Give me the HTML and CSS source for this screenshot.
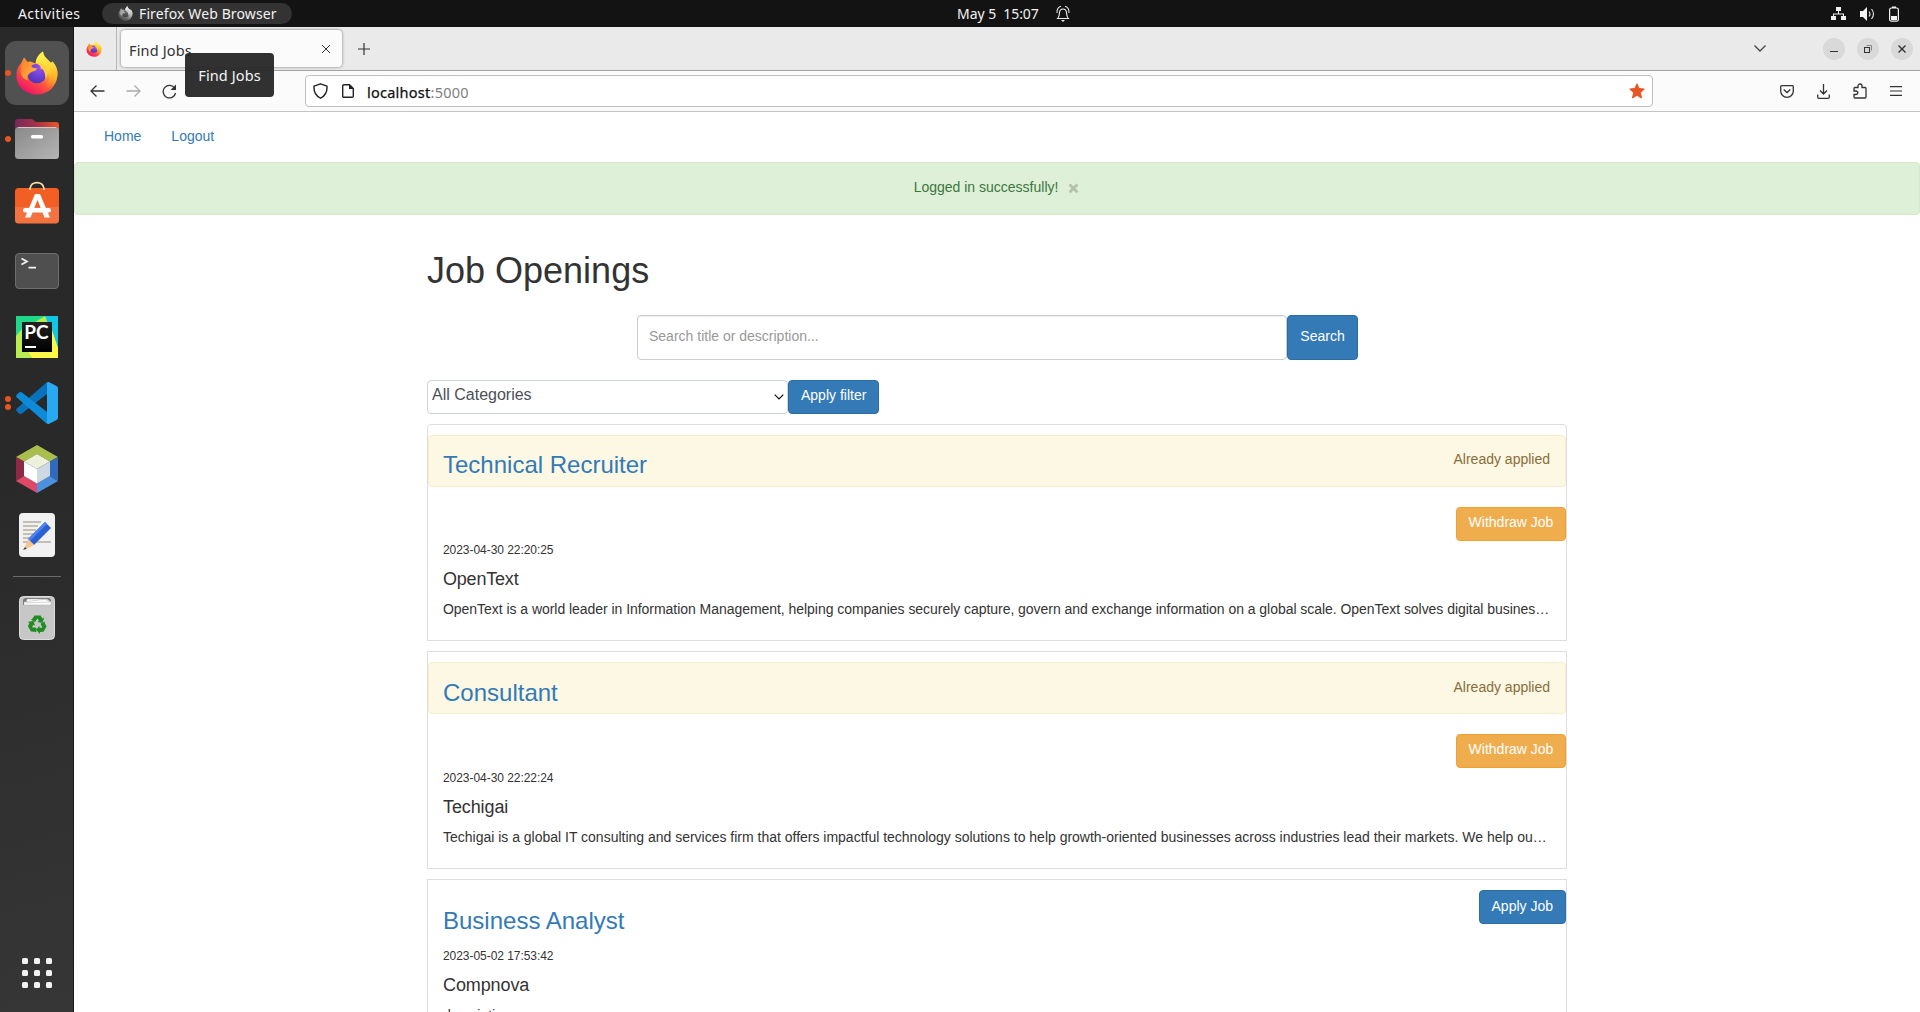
FILE: index.html
```html
<!DOCTYPE html>
<html lang="en">
<head>
<meta charset="utf-8">
<title>Find Jobs</title>
<link rel="stylesheet" href="styles.css">
</head>
<body>
<svg class="defs" aria-hidden="true">
  <defs>
    <linearGradient id="fx-body" x1=".8" y1=".1" x2=".25" y2=".95"><stop offset="0" stop-color="#fff14a"/><stop offset=".35" stop-color="#ffb02c"/><stop offset=".65" stop-color="#ff5040"/><stop offset="1" stop-color="#f01468"/></linearGradient>
    <linearGradient id="fx-tail" x1=".3" y1="0" x2=".6" y2="1"><stop offset="0" stop-color="#fff44f"/><stop offset=".5" stop-color="#ffd53a"/><stop offset="1" stop-color="#ff980e" stop-opacity="0"/></linearGradient>
    <radialGradient id="fx-globe" cx=".65" cy=".2" r=".85"><stop offset="0" stop-color="#9a50f5"/><stop offset="1" stop-color="#4b35b8"/></radialGradient>
    <linearGradient id="fx-head" x1="0" y1="0" x2="1" y2=".6"><stop offset="0" stop-color="#ff7a2a"/><stop offset="1" stop-color="#ffb53a"/></linearGradient>
    <symbol id="firefox" viewBox="0 0 42 44">
      <path fill="url(#fx-body)" d="M5 12.500 8 6.500l3.500 4.500 3-.5 5 2C20 7 23 3 27 .5c.5 5.500 5 8 8 11.500l1.500-1.500c4 5 5.500 9 5 14C40.500 35.500 32 43.500 21 43.500S.5 35.500.5 25C.5 19 2 16 5 12.500z"/>
      <path fill="url(#fx-tail)" d="M20 12C20 7 23 3 27 .5c.5 5.500 5 8 8 11.500l1.500-1.500c4 5 5.500 9 5 14C40 33 34 38 27 38c6-5 8-12 4-18z"/>
      <circle cx="21" cy="22.500" r="9.800" fill="url(#fx-globe)"/>
      <path fill="#ffcf3b" d="M20 12.700c3-1.700 7-.7 10 2.800 3 4 2 9-.5 13 0-5-1-7.500-2.500-10l-2.500-1c1-2-1.500-4-4.500-4.800z"/>
      <path fill="url(#fx-head)" d="M6 14 8 7l3.500 4.500 4 .5c-1 2 0 3.500 1.500 4.800l4 .7c-.5 3-5 2.500-7.500 5-2 1.500-3 4-1.500 7-7-2-9-8-6-15.500z"/>
    </symbol>
  </defs>
</svg>
<div class="desktop">
  <header class="topbar">
    <div class="topbar-left">
      <span class="activities">Activities</span>
      <span class="app-pill"><svg class="pill-icon"><use href="#firefox"/></svg><span class="pill-label">Firefox Web Browser</span></span>
    </div>
    <div class="clock"><span>May 5</span><span class="time">15:07</span>
      <svg class="bell" width="14" height="18" viewBox="0 0 14 18" fill="none" stroke="#eee" stroke-width="1.1"><path d="M.8 13.500h12.400M2 13c1.300-1.500 1.300-3 1.500-5.500.2-2 1.500-3.500 3.500-3.500s3.300 1.500 3.500 3.500c.2 2.500.2 4 1.500 5.500M1 8C.8 4.500 2.500 2 5 1.300M13 8c.2-3.500-1.500-6-4-6.700"/><path d="M5 15h4L7 17z" fill="#eee" stroke="none"/></svg>
    </div>
    <div class="tray">
      <svg width="15" height="14" viewBox="0 0 15 14" fill="#f2f2f2"><path d="M5 0h5v4H5zM0 9h5v4H0zM10 9h5v4h-5zM7 4h1v2.500H7zM2 6.500h11V9h-1V7.500H3V9H2z"/></svg>
      <svg width="15" height="14" viewBox="0 0 15 14"><path fill="#f2f2f2" d="M0 4h3l4-4v14l-4-4H0z"/><path fill="none" stroke="#ddd" stroke-width="1.200" d="M9 4.500q2 2.500 0 5M11.500 2q4 5 0 10"/></svg>
      <svg width="10" height="16" viewBox="0 0 10 16"><rect x=".6" y="2" width="8.800" height="13.200" rx="1.800" fill="none" stroke="#f2f2f2" stroke-width="1.200"/><path fill="#f2f2f2" d="M3 .5h4V2H3zM2 10h6v4H2z"/></svg>
    </div>
  </header>

  <div class="workspace">
    <nav class="dock">
      <div class="dock-item running"><div class="dock-tile"><svg width="42" height="44"><use href="#firefox"/></svg></div></div>
      <div class="dock-item running">
        <svg width="44" height="40" viewBox="0 0 44 40"><defs><linearGradient id="fo"><stop offset="0" stop-color="#77285a"/><stop offset=".5" stop-color="#a73249"/><stop offset="1" stop-color="#ed5625"/></linearGradient><linearGradient id="fg" x2="1" y2="1"><stop offset="0" stop-color="#898989"/><stop offset="1" stop-color="#b5b5b5"/></linearGradient></defs><path fill="url(#fo)" d="M0 3q0-3 3-3h14l4 3h20q3 0 3 3v12H0z"/><rect y="8" width="44" height="32" rx="3.500" fill="url(#fg)"/><path d="M3 8.500h38" stroke="#ccc"/><rect x="16" y="16" width="12" height="3.500" rx="1.500" fill="#fff"/></svg>
      </div>
      <div class="dock-item store">
        <svg width="44" height="44" viewBox="0 0 44 44"><rect y="8" width="44" height="35.500" rx="3.500" fill="#f15f24"/><path fill="#fff" opacity=".13" d="M0 27h44v13q0 3.500-3.500 3.500h-37Q0 43.500 0 40z"/><path d="M15 10V8.500C16 .6 28 .6 29 8.500V10" fill="none" stroke="#fbe2ab" stroke-width="1.800"/><path d="M20 14h5l10 23.500h-5.500L22.500 20l-7 17.500H10z" fill="#fff"/><rect x="8" y="28" width="28" height="4.600" rx="2.300" fill="#fff"/></svg>
      </div>
      <div class="dock-item">
        <svg width="44" height="36" viewBox="0 0 44 36"><rect x=".5" y=".5" width="43" height="35" rx="3.500" fill="#4f4f4f" stroke="#6d6d6d"/><path d="M6.500 5.500 12 8.500l-5.500 3M13.500 14.700H21" fill="none" stroke="#f5f5f5" stroke-width="1.700"/></svg>
      </div>
      <div class="dock-item">
        <div class="pycharm">
          <svg class="pc-back" width="42" height="42" viewBox="0 0 42 42"><path fill="#21d789" d="M0 0h42v42H0z"/><path fill="#12c7e4" d="M29 0h13v34L28 12z"/><path fill="#fcf84a" d="M36 14l6 18v10H16L8 34z"/><path fill="#b9ec52" d="M16 8 29 0l4 10zM0 42l8-14 8 14zM0 42V20l7-8v18z"/></svg>
          <span class="pc-mark">PC</span>
        </div>
      </div>
      <div class="dock-item running two">
        <svg width="42" height="42" viewBox="0 0 42 42"><path fill="#0a71bb" d="M31 0v12L6 31.500q-1.500 1-3 0L.8 29.300q-1.200-1.300 0-2.700z"/><path fill="#0e8bd8" d="M31 42V30L6 10.500q-1.500-1-3 0L.8 12.700q-1.200 1.300 0 2.700z"/><path fill="#29a9f2" d="M31 .5q1-.8 2.200-.2L40.500 4q1.500.7 1.500 2.400v29.200q0 1.700-1.500 2.400l-7.300 3.700q-1.200.6-2.200-.2z"/></svg>
      </div>
      <div class="dock-item">
        <svg width="42" height="48" viewBox="0 0 42 48"><path fill="#a9bf4d" d="M21 0 42 12l-8 4.500L21 9 8 16.500 0 12z"/><path fill="#8d2947" d="m0 12 8 4.500V31l-8 5z"/><path fill="#dc4a68" d="m0 36 8-5 13 7.500V48z"/><path fill="#4b91df" d="M21 48v-9.500L34 31l8 5z"/><path fill="#3169bd" d="m42 12-8 4.500V31l8 5z"/><path fill="#edf1dc" d="m21 9 13 7.500L21 24 8 16.500z"/><path fill="#fff" d="M8 16.500 21 24v14.500L8 31z"/><path fill="#ced8e3" d="M34 16.500 21 24v14.500L34 31z"/></svg>
      </div>
      <div class="dock-item">
        <svg width="36" height="44" viewBox="0 0 36 44"><rect width="36" height="44" rx="4" fill="#f1f1f1"/><path d="M4 9h18M4 13h15M4 17h13M4 21h13M4 25h12M4 29h28" stroke="#c5c0b5" stroke-width="1.800"/><path fill="#2c5fd2" d="m26 9 6 6-17 17-6-6z"/><path fill="#4d83ee" d="m26 9 2 2L11 28l-2-2z"/><path fill="#f8c48c" d="m9 26 6 6-10 5z"/><path fill="#444" d="m6 34 1.800 1.700L4 37z"/></svg>
      </div>
      <div class="dock-separator"></div>
      <div class="dock-item">
        <svg width="36" height="44" viewBox="0 0 36 44"><rect x=".5" y=".5" width="35" height="43" rx="4" fill="#c7c7c7" stroke="#ddd"/><path d="M4 9V5q0-3 3-3h22q3 0 3 3v4z" fill="#777"/><path d="M5 9V6l23-3 4 3v3zM8 3h18l5 3-24 1z" fill="#fff" stroke="#aaa" stroke-width=".5"/>
          <g fill="#218c21"><path id="arrow" d="M13.500 22.500 15.500 19.500h6l2 3 1.700-1-1.700 5.500-5.200-1 1.700-1-1.500-2.500-2.500 3.500-4-2.300z"/><use href="#arrow" transform="rotate(120 18.300 28.500)"/><use href="#arrow" transform="rotate(240 18.300 28.500)"/></g></svg>
      </div>
      <div class="app-grid"><i></i><i></i><i></i><i></i><i></i><i></i><i></i><i></i><i></i></div>
    </nav>

    <div class="browser">
      <div class="tabstrip">
        <div class="pinned"><svg width="16" height="16"><use href="#firefox"/></svg></div>
        <div class="tab"><span class="tab-title">Find Jobs</span><svg width="8" height="8" viewBox="0 0 8 8" stroke="#333" stroke-width="1"><path d="m0 0 8 8M8 0 0 8"/></svg>
          <div class="tooltip">Find Jobs</div>
        </div>
        <svg class="new-tab" width="12" height="12" viewBox="0 0 12 12" stroke="#333" stroke-width="1.200"><path d="M6 0v12M0 6h12"/></svg>
        <svg class="all-tabs" width="12" height="7" viewBox="0 0 12 7" fill="none" stroke="#444" stroke-width="1.300"><path d="m.5.5 5.500 5.500L11.500.5"/></svg>
        <div class="window-controls">
          <span><svg width="8" height="8" viewBox="0 0 8 8"><path d="M0 6.500h8" stroke="#333"/></svg></span>
          <span><svg width="8" height="8" viewBox="0 0 8 8" fill="none"><path d="M2.500.5h5v5" stroke="#888"/><path d="M.5 2.500h5v5h-5z" stroke="#333" stroke-width="1.100"/></svg></span>
          <span><svg width="8" height="8" viewBox="0 0 8 8" stroke="#333" stroke-width="1.400"><path d="m.5.5 7 7M7.500.5l-7 7"/></svg></span>
        </div>
      </div>
      <div class="toolbar">
        <div class="nav-buttons">
          <svg width="15" height="12" viewBox="0 0 15 12" fill="none" stroke="#333" stroke-width="1.300"><path d="M6.500.5 1 6l5.500 5.500M1 6h13.500"/></svg>
          <svg width="15" height="12" viewBox="0 0 15 12" fill="none" stroke="#aaa" stroke-width="1.300"><path d="M8.500.5 14 6l-5.500 5.500M14 6H.5"/></svg>
          <svg width="15" height="15" viewBox="0 0 15 15" fill="none" stroke="#333" stroke-width="1.300"><path d="M12.800 4.300A6.300 6.300 0 1 0 13.600 9"/><path d="M14 .5V6H8.500z" fill="#333" stroke="none"/></svg>
        </div>
        <div class="urlbar">
          <svg width="15" height="16" viewBox="0 0 15 16" fill="none" stroke="#222" stroke-width="1.400"><path d="M7.500.8 14 3.200c.3 5-1.200 9.500-6.500 12-5.300-2.500-6.800-7-6.500-12z" stroke-linejoin="round"/></svg>
          <svg class="page-icon" width="12" height="14" viewBox="0 0 12 14"><path d="M2 .7h5.500L11.300 4.500V12q0 1.300-1.300 1.300H2Q.7 13.300.7 12V2Q.7.7 2 .7z" fill="none" stroke="#222" stroke-width="1.400"/><path d="M7 0v5h5z" fill="#222"/></svg>
          <span class="url"><span class="host">localhost</span><span class="port">:5000</span></span>
          <svg class="star" width="16" height="16" viewBox="0 0 16 16"><path fill="#e95420" stroke="#e95420" stroke-linejoin="round" d="m8 .8 2.100 4.700 5.200.6-3.900 3.500 1.100 5.400L8 12.300 3.500 15l1.100-5.400L.7 6.100l5.200-.6z"/></svg>
        </div>
        <div class="actions">
          <svg width="14" height="13" viewBox="0 0 14 13" fill="none" stroke="#333" stroke-width="1.300"><path d="M1.700.7h10.600q1 0 1 1V6a6.300 6.300 0 0 1-12.600 0V1.700q0-1 1-1z"/><path d="m3.700 4.500 3.300 3 3.300-3"/></svg>
          <svg width="13" height="15" viewBox="0 0 13 15" fill="none" stroke="#333" stroke-width="1.300"><path d="M6.500 0v10M3 6.500l3.500 3.500L10 6.500M.7 10.500V13q0 1.300 1.300 1.300h9q1.300 0 1.300-1.300v-2.500"/></svg>
          <svg width="14" height="16" viewBox="0 0 14 16" fill="none" stroke="#333" stroke-width="1.300"><path d="M1 8V5.500Q1 4.500 2 4.500h3V3a2 2 0 0 1 4 0v1.500h3q1 0 1 1V14q0 1-1 1H2q-1 0-1-1v-2.500h2a1.700 1.700 0 0 0 0-3.500z"/></svg>
          <svg width="12" height="10" viewBox="0 0 12 10" stroke="#333" stroke-width="1.200"><path d="M0 .6h12M0 5h12M0 9.400h12"/></svg>
        </div>
      </div>

      <main class="page">
        <nav class="site-nav"><a>Home</a><a>Logout</a></nav>
        <div class="flash"><span>Logged in successfully!</span><b class="close">×</b></div>
        <div class="container">
          <h1>Job Openings</h1>
          <div class="search-row"><div class="search-input">Search title or description...</div><span class="btn primary search-btn">Search</span></div>
          <div class="filter-row">
            <div class="select"><span>All Categories</span><svg width="10" height="6" viewBox="0 0 10 6" fill="none" stroke="#111" stroke-width="1.200"><path d="m.7.7 4.300 4.300L9.300.7"/></svg></div>
            <span class="btn primary">Apply filter</span>
          </div>
          <div class="jobs">
            <article class="job first">
              <div class="job-head applied"><h3>Technical Recruiter</h3><span class="status">Already applied</span></div>
              <div class="job-action"><span class="btn warning">Withdraw Job</span></div>
              <div class="job-body"><small>2023-04-30 22:20:25</small><h4>OpenText</h4><p>OpenText is a world leader in Information Management, helping companies securely capture, govern and exchange information on a global scale. OpenText solves digital busines…</p></div>
            </article>
            <article class="job second">
              <div class="job-head applied"><h3>Consultant</h3><span class="status">Already applied</span></div>
              <div class="job-action"><span class="btn warning">Withdraw Job</span></div>
              <div class="job-body"><small>2023-04-30 22:22:24</small><h4>Techigai</h4><p>Techigai is a global IT consulting and services firm that offers impactful technology solutions to help growth-oriented businesses across industries lead their markets. We help ou…</p></div>
            </article>
            <article class="job third">
              <div class="job-head"><h3>Business Analyst</h3><span class="btn primary">Apply Job</span></div>
              <div class="job-body"><small>2023-05-02 17:53:42</small><h4>Compnova</h4><p>description</p></div>
            </article>
          </div>
        </div>
      </main>
    </div>
  </div>
</div>
</body>
</html>
```
FILE: styles.css
```css
* { box-sizing: border-box; }
body { margin: 0; overflow: hidden; font-family: "Liberation Sans", Arial, sans-serif; font-size: 14px; line-height: 20px; color: #333; }
svg { display: block; flex: none; }
.defs { position: absolute; width: 0; height: 0; }
.desktop { width: 1920px; height: 1012px; display: flex; flex-direction: column; overflow: hidden; }

/* System bar */
.topbar { height: 27px; flex: none; background: #131313; color: #f2f2f2; display: grid; grid-template-columns: 1fr auto 1fr; align-items: center; font: 14px/20px "Noto Sans", sans-serif; white-space: nowrap; }
.topbar-left { display: flex; align-items: center; padding-left: 18px; }
.activities { width: 84px; letter-spacing: .4px; }
.app-pill { width: 190px; height: 21px; border-radius: 11px; background: #333; display: flex; align-items: center; padding-left: 16px; gap: 6px; }
.pill-icon { width: 15px; height: 15px; filter: grayscale(1); }
.pill-label { letter-spacing: .12px; }
.clock { display: flex; align-items: center; width: 113px; margin-left: 107px; }
.time { margin-left: 7px; letter-spacing: -.1px; }
.bell { margin-left: auto; }
.tray { display: flex; align-items: center; justify-content: flex-end; gap: 14px; padding-right: 21px; }

/* Dock */
.workspace { flex: 1; min-height: 0; display: flex; }
.dock { width: 74px; flex: none; background: linear-gradient(165deg, #292929 0 45%, #303030 75%, #363636); border-right: 1px solid #171717; display: flex; flex-direction: column; padding-top: 13px; }
.dock-item { height: 66px; flex: none; display: flex; align-items: center; justify-content: center; position: relative; }
.store { padding-bottom: 6px; }
.dock-tile { width: 64px; height: 64px; border-radius: 11px; background: #515151; display: flex; align-items: center; justify-content: center; }
.running::before { content: ""; position: absolute; left: 5px; top: 30px; width: 6px; height: 6px; border-radius: 50%; background: #e95420; }
.two::before { top: 26px; box-shadow: 0 8px #e95420; }
.pycharm { display: grid; place-items: center; width: 42px; height: 42px; }
.pc-back, .pc-mark { grid-area: 1 / 1; }
.pc-mark { position: relative; width: 30px; height: 30px; background: linear-gradient(#222, #000); color: #fff; font: 700 19px/20px Lato, sans-serif; text-align: center; }
.pc-mark::after { content: ""; position: absolute; left: 3px; bottom: 4px; width: 11px; height: 2px; background: #fff; }
.dock-separator { width: 48px; height: 1px; background: #6b6b6b; margin: 8px auto 8px 13px; flex: none; }
.app-grid { margin: auto auto 24px 22px; display: grid; grid-template-columns: repeat(3, 6px); gap: 6px; }
.app-grid i { width: 6px; height: 6px; background: #f3f3f3; border-radius: 1.5px; }

/* Browser chrome */
.browser { flex: 1; min-width: 0; display: flex; flex-direction: column; background: #fff; }
.tabstrip { height: 44px; flex: none; background: #eaeaea; border-bottom: 1px solid #a3a3a3; display: flex; align-items: center; font: 14.5px/20px "Noto Sans", sans-serif; }
.pinned { width: 43px; align-self: stretch; border-right: 1px solid #b5b5b5; display: flex; align-items: center; padding-left: 12px; }
.tab { position: relative; margin-left: 4px; width: 221px; height: 37px; background: #fbfbfb; border-radius: 4px; box-shadow: 0 0 3px rgba(0,0,0,.5); display: flex; align-items: center; justify-content: space-between; padding: 0 12px 0 8px; }
.tab-title { letter-spacing: .15px; padding-top: 2px; }
.tooltip { position: absolute; z-index: 2; left: 64px; top: 23px; width: 89px; height: 44px; border-radius: 4px; background: rgba(38,38,38,.95); color: #f4f4f4; text-align: center; line-height: 45px; letter-spacing: .1px; }
.new-tab { margin-left: 16px; }
.all-tabs { margin-left: auto; margin-right: 57px; }
.window-controls { display: flex; gap: 12px; padding-right: 7px; }
.window-controls span { width: 22px; height: 22px; border-radius: 50%; background: #d9d9d9; display: flex; align-items: center; justify-content: center; }
.toolbar { height: 41px; flex: none; background: #fbfbfb; border-bottom: 1px solid #c4c4c4; display: flex; align-items: center; }
.nav-buttons { width: 231px; display: flex; align-items: center; gap: 21px; padding-left: 16px; }
.urlbar { width: 1348px; height: 32px; border: 1px solid #bfbfbf; border-radius: 4px; background: #fff; display: flex; align-items: center; padding: 0 8px 0 7px; }
.page-icon { margin-left: 14px; }
.url { margin-left: 13px; padding-top: 2px; font: 14.5px/20px "Noto Sans", sans-serif; letter-spacing: .25px; }
.host { color: #111; -webkit-text-stroke: .25px #111; }
.port { color: #808080; }
.star { margin-left: auto; margin-right: -1px; }
.actions { display: flex; align-items: center; gap: 23px; margin-left: 127px; }

/* Job board */
.page { flex: 1; min-height: 0; overflow: hidden; }
.site-nav { height: 50px; display: flex; gap: 30px; padding: 14px 0 0 30px; color: #337ab7; }
.flash { height: 53px; background: #dff0d8; border: 1px solid #d6e9c6; border-radius: 4px; color: #3c763d; display: flex; justify-content: center; padding: 14px 2px 0 0; }
.close { font-size: 17px; line-height: 24px; margin-left: 10px; color: #000; opacity: .2; -webkit-text-stroke: 1px #000; }
.container { width: 1140px; margin-left: 353px; padding-top: 36px; }
h1, h3, h4, p { margin: 0; font-weight: 400; }
h1 { font-size: 36px; line-height: 40px; height: 64px; }
.search-row { display: flex; height: 45px; padding-left: 210px; }
.search-input { width: 650px; border: 1px solid #ccc; border-radius: 4px; padding: 10px 11px; color: #999; box-shadow: inset 0 1px 1px rgba(0,0,0,.075); }
.btn { display: block; height: 34px; padding: 4px 12px; border: 1px solid; border-radius: 4px; color: #fff; white-space: nowrap; text-align: center; }
.primary { background: #337ab7; border-color: #2e6da4; }
.warning { width: 110px; padding-inline: 0; background: #f0ad4e; border-color: #eea236; }
.search-btn { width: 71px; height: 45px; padding-top: 10px; }
.filter-row { display: flex; margin-top: 20px; }
.select { width: 361px; height: 34px; border: 1px solid #ced4da; border-radius: 4px; padding: 4px 3px 0 4px; display: flex; justify-content: space-between; font-size: 16px; color: #495057; }
.select svg { margin-top: 9px; }
.jobs { display: flex; flex-direction: column; gap: 10px; margin-top: 10px; }
.job { border: 1px solid #ddd; flex: none; height: 217px; padding-top: 10px; }
.first { border-radius: 4px 4px 0 0; }
.second { height: 218px; }
.job-head { height: 52px; display: flex; justify-content: space-between; padding-left: 15px; }
.applied { background: #fcf8e3; border: 1px solid #faebcc; border-radius: 4px; padding: 0 15px 0 14px; color: #8a6d3b; }
h3 { font-size: 24px; line-height: 26px; padding-top: 18px; color: #337ab7; }
.first h3 { padding-top: 16px; }
.second h3 { padding-top: 17px; }
.status { padding-top: 13px; }
.second .status { padding-top: 14px; }
.job-action { display: flex; justify-content: flex-end; margin-top: 20px; }
.job-body { padding: 0 15px; }
.second .job-body { padding-top: 1px; }
small { display: block; font-size: 12px; line-height: 18px; letter-spacing: -.05px; }
h4 { font-size: 18px; line-height: 20px; margin: 10px 0; letter-spacing: -.1px; }
.first h4 { letter-spacing: -.2px; }
p { white-space: nowrap; }
.first p { letter-spacing: -.043px; }
.second p { letter-spacing: -.007px; }
.third .job-head { height: 57px; }
.third { height: 218px; }
.third .btn { padding-top: 5px; }
```
